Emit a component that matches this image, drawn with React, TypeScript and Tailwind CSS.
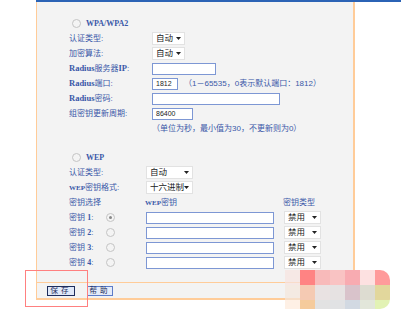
import React from "react";

const label = "text-[#3a58a8] text-[8px] leading-none";
const latin = "font-['Liberation_Serif','Noto_Sans_CJK_SC',serif] font-bold";

const Arrow = () => (
  <svg width="5" height="3" viewBox="0 0 5 3" className="shrink-0">
    <path d="M0 0h5L2.5 3z" fill="#222" />
  </svg>
);

const Select = ({ text, w }: { text: string; w: string }) => (
  <div
    className={`${w} h-[13px] bg-white border border-[#e2e2e2] flex items-center justify-between pl-[3px] pr-[3px] text-[8.5px] text-[#222] leading-none`}
  >
    <span>{text}</span>
    <Arrow />
  </div>
);

const Input = ({ w, value }: { w: string; value?: string }) => (
  <div
    className={`${w} h-[12px] bg-white border border-[#7d97d4] flex items-center pl-[3px] text-[7px] text-[#222] leading-none`}
  >
    {value}
  </div>
);

const Radio = ({ checked }: { checked?: boolean }) => (
  <div className="w-[9px] h-[9px] rounded-full border border-[#c4c4c4] bg-[#f4f4f4] flex items-center justify-center shrink-0">
    {checked && <div className="w-[3px] h-[3px] rounded-full bg-[#888]" />}
  </div>
);

const Row = ({
  children,
  lw = "w-[83px]",
  name,
}: {
  children?: React.ReactNode;
  lw?: string;
  name: React.ReactNode;
}) => (
  <div className="h-[15px] flex items-center pl-[32px]">
    <div className={`${lw} ${label} shrink-0`}>{name}</div>
    {children}
  </div>
);

const Lat = ({ children }: { children: React.ReactNode }) => (
  <span className={`${latin} text-[8.5px]`}>{children}</span>
);

const mosaic = [
  ["#f7e2de", "#ff8383", "#f8baba", "#f9c3c3", "#f8abb1", "#fde1e1", "#ff9b9b"],
  ["#f4e6da", "#f5cab3", "#e9e2e2", "#e6e2e2", "#d9c3cb", "#dddcd1", "#e2d79c"],
  ["#fde9da", "#f5cb9c", "#e2e2e2", "#e1e2e4", "#d2d9e2", "#e2e6da", "#e2f2b4"],
];

export default function App() {
  return (
    <div className="w-[401px] h-[309px] bg-white relative overflow-hidden font-['Liberation_Sans','Noto_Sans_CJK_SC',sans-serif]">
      <div className="pl-[36px]">
        <div className="h-[2px] bg-[#2b63b5]" />
        <div className="w-[319px] bg-[#f3f3f3] border-l border-r-2 border-b-2 border-[#ffcc99]">
          <div className="pt-[14px] pb-[12px]">
            <div className="h-[15px] flex items-center pl-[35px] gap-[5px]">
              <Radio />
              <span className={`${label} ${latin} text-[7px]`}>WPA/WPA2</span>
            </div>
            <Row name="认证类型:">
              <Select text="自动" w="w-[33px]" />
            </Row>
            <Row name="加密算法:">
              <Select text="自动" w="w-[33px]" />
            </Row>
            <Row
              name={
                <>
                  <Lat>Radius</Lat>服务器<Lat>IP</Lat>:
                </>
              }
            >
              <Input w="w-[64px]" />
            </Row>
            <Row
              name={
                <>
                  <Lat>Radius</Lat>端口:
                </>
              }
            >
              <Input w="w-[26px]" value="1812" />
              <span className={`${label} ml-[6px]`}>（1－65535，0表示默认端口：1812）</span>
            </Row>
            <Row
              name={
                <>
                  <Lat>Radius</Lat>密码:
                </>
              }
            >
              <Input w="w-[128px]" />
            </Row>
            <Row name="组密钥更新周期:">
              <Input w="w-[41px]" value="86400" />
            </Row>
            <div className="h-[15px] flex items-center pl-[115px]">
              <span className={label}>（单位为秒，最小值为30，不更新则为0）</span>
            </div>
            <div className="h-[14px]" />
            <div className="h-[15px] flex items-center pl-[35px] gap-[5px]">
              <Radio />
              <span className={`${label} ${latin} text-[7px]`}>WEP</span>
            </div>
            <Row name="认证类型:" lw="w-[77px]">
              <Select text="自动" w="w-[47px]" />
            </Row>
            <Row
              name={
                <>
                  <span className={`${latin} text-[7px]`}>WEP</span>密钥格式:
                </>
              }
              lw="w-[77px]"
            >
              <Select text="十六进制" w="w-[47px]" />
            </Row>
            <div className="h-[15px] flex items-center pl-[32px]">
              <span className={`${label} w-[76px]`}>密钥选择</span>
              <span className={`${label} w-[138px]`}>
                <span className={`${latin} text-[7px]`}>WEP</span>密钥
              </span>
              <span className={label}>密钥类型</span>
            </div>
            {[1, 2, 3, 4].map((n) => (
              <div key={n} className="h-[15px] flex items-center pl-[32px]">
                <span className={`${label} w-[37px]`}>
                  密钥 <span className={latin}>{n}</span>:
                </span>
                <Radio checked={n === 1} />
                <div className="w-[31px]" />
                <Input w="w-[128px]" />
                <div className="w-[10px]" />
                <Select text="禁用" w="w-[37px]" />
              </div>
            ))}
          </div>
          <div className="h-[16px] border-t border-[#ffcc99] flex items-center pl-[10px] gap-[12px]">
            <button className="w-[28px] h-[10px] bg-[#dfe8f8] border border-[#1e2d5c] text-[7.5px] leading-none text-[#1e2d5c] tracking-[3px] flex items-center justify-center">
              保存
            </button>
            <button className="w-[26px] h-[10px] bg-[#e4ebf9] border border-[#5d7cc8] text-[7.5px] leading-none text-[#1e2d5c] tracking-[3px] flex items-center justify-center">
              帮助
            </button>
          </div>
        </div>
      </div>

      <div className="absolute left-[25px] top-[270px] w-[63px] h-[37px] border-[1.5px] border-[#ff8080]" />

      <div className="absolute left-[285px] top-[270px] w-[105px] h-[39px] rounded-r-[10px] overflow-hidden flex flex-col">
        {mosaic.map((row, i) => (
          <div key={i} className="flex h-[15px]">
            {row.map((c, j) => (
              <div
                key={j}
                className={`w-[15px] h-[15px] ${j === 0 ? "opacity-70" : ""}`}
                style={{ backgroundColor: c }}
              />
            ))}
          </div>
        ))}
      </div>
    </div>
  );
}
